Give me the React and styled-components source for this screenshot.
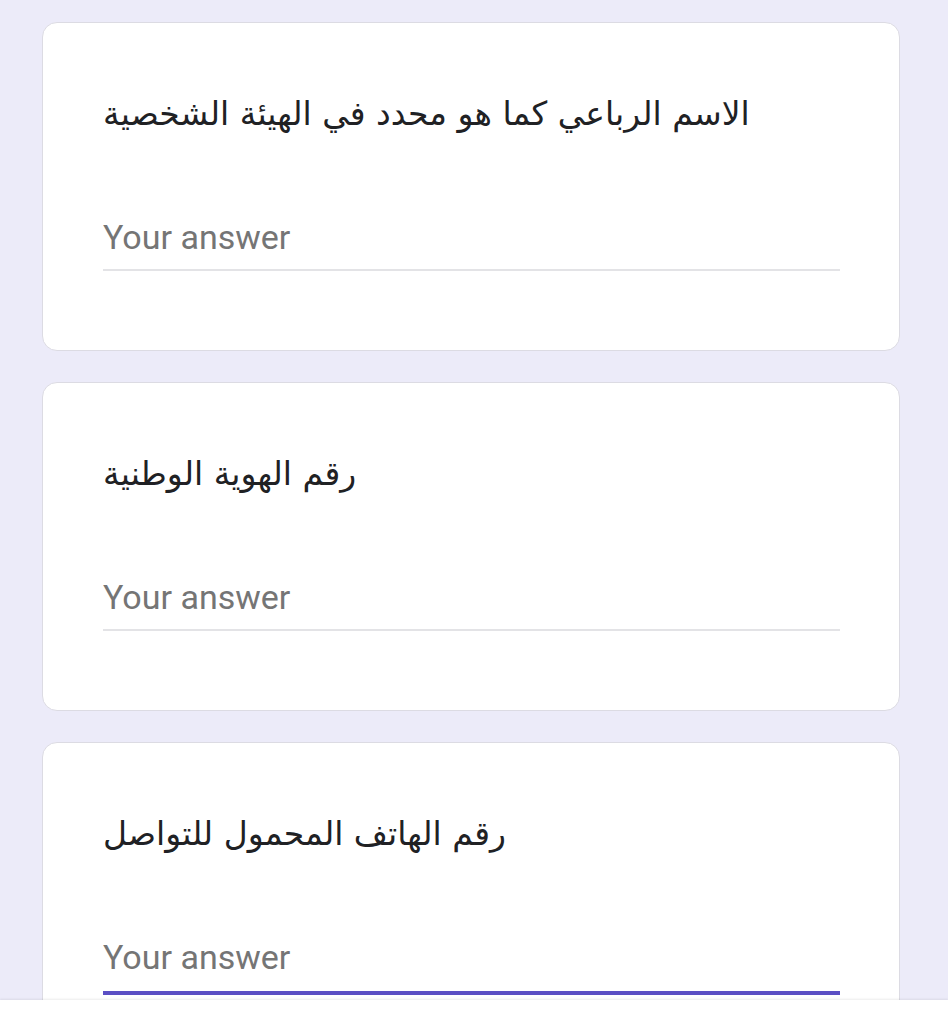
import React from "react";
import styled, { createGlobalStyle } from "styled-components";

const GlobalStyle = createGlobalStyle`
  html, body {
    margin: 0;
    padding: 0;
    background: #ecebf9;
  }
  * { box-sizing: border-box; }
`;

const Page = styled.div`
  min-height: 1024px;
  padding: 22px 48px 60px 42px;
  display: grid;
  grid-template-columns: 1fr;
  row-gap: 31px;
  background: #ecebf9;
`;

const Card = styled.div`
  background: #fff;
  border: 1px solid #dcdbe3;
  border-radius: 15px;
  height: 329px;
  padding: 70px 59px 0 60px;
  display: flex;
  flex-direction: column;
`;

const Title = styled.div`
  font-family: "DejaVu Sans", "Noto Sans", sans-serif;
  font-size: 33px;
  line-height: 42px;
  color: #202124;
  text-align: left;
`;

const Answer = styled.input`
  margin-top: 82px;
  width: 100%;
  border: none;
  border-bottom: ${p => (p.$active ? "4px solid #5b4fc4" : "2px solid #e3e3e6")};
  padding: 0 0 ${p => (p.$active ? "14px" : "12px")};
  height: ${p => (p.$active ? "58px" : "54px")};
  font-family: Roboto, "Liberation Sans", sans-serif;
  font-size: 34px;
  line-height: 40px;
  color: #202124;
  background: transparent;
  outline: none;
  &::placeholder {
    color: #757575;
  }
`;

const BottomBar = styled.div`
  position: fixed;
  left: 0;
  right: 0;
  bottom: 0;
  height: 24px;
  background: #fff;
  box-shadow: 0 -1px 2px rgba(0, 0, 0, 0.08);
`;

const questions = [
  "الاسم الرباعي كما هو محدد في الهيئة الشخصية",
  "رقم الهوية الوطنية",
  "رقم الهاتف المحمول للتواصل",
];

export default function App() {
  return (
    <>
      <GlobalStyle />
      <Page>
        {questions.map((q, i) => (
          <Card key={i}>
            <Title>{q}</Title>
            <Answer placeholder="Your answer" $active={i === 2} />
          </Card>
        ))}
      </Page>
      <BottomBar />
    </>
  );
}
